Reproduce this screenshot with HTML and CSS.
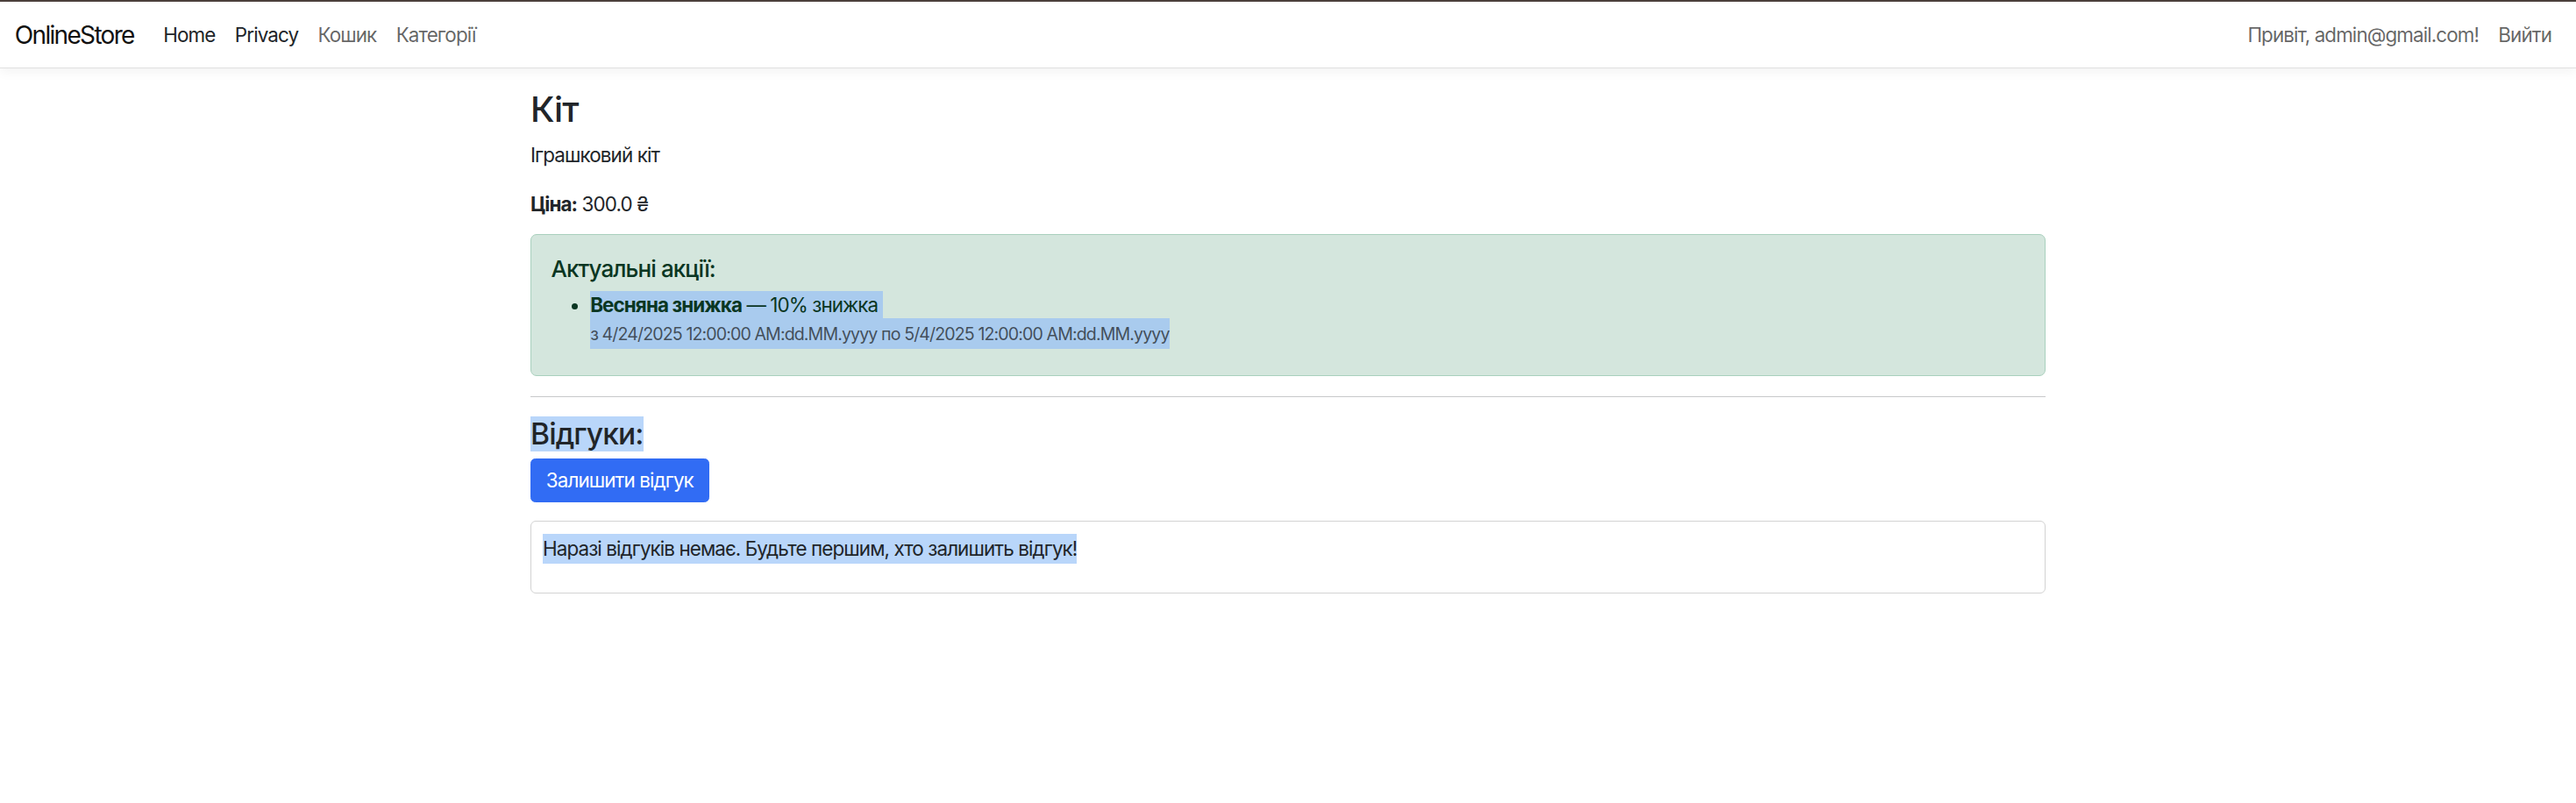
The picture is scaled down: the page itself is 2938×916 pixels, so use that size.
FILE: index.html
```html
<!DOCTYPE html>
<html lang="uk">
<head>
<meta charset="utf-8">
<title>Кіт - OnlineStore</title>
<link rel="stylesheet" href="styles.css">
</head>
<body>
<header class="navbar">
  <div class="nav-left">
    <a class="brand" href="#">OnlineStore</a>
    <nav class="nav-links">
      <a class="nav-link dark" href="#">Home</a>
      <a class="nav-link dark" href="#">Privacy</a>
      <a class="nav-link" href="#">Кошик</a>
      <a class="nav-link" href="#">Категорії</a>
    </nav>
  </div>
  <nav class="nav-links">
    <a class="nav-link" href="#">Привіт, admin@gmail.com!</a>
    <a class="nav-link" href="#">Вийти</a>
  </nav>
</header>
<main class="container">
  <h1 class="title">Кіт</h1>
  <p class="desc">Іграшковий кіт</p>
  <p class="price"><strong>Ціна:</strong> 300.0 ₴</p>
  <section class="alert">
    <h5 class="alert-title">Актуальні акції:</h5>
    <ul class="promo-list">
      <li><span class="sel sel-green line1"><strong>Весняна знижка</strong> — 10% знижка</span><br><span class="sel sel-green line2"><small class="muted">з 4/24/2025 12:00:00 AM:dd.MM.yyyy по 5/4/2025 12:00:00 AM:dd.MM.yyyy</small></span></li>
    </ul>
  </section>
  <hr class="divider">
  <h4 class="reviews-title"><span class="sel sel-white">Відгуки: </span></h4>
  <button class="btn-primary" type="button">Залишити відгук</button>
  <div class="review-box">
    <p class="review-empty"><span class="sel sel-white">Наразі відгуків немає. Будьте першим, хто залишить відгук!</span></p>
  </div>
</main>
</body>
</html>
```
FILE: styles.css
```css
* { box-sizing: border-box; }
html, body { margin: 0; padding: 0; }
body {
  font-family: Inter, "Noto Sans", "Liberation Sans", sans-serif;
  font-size: 22.4px;
  line-height: 1.5;
  letter-spacing: -0.04em;
  color: #212529;
  background: #fff;
}
a { text-decoration: none; }

.navbar {
  display: flex;
  justify-content: space-between;
  align-items: center;
  height: 78px;
  border-top: 2px solid #4b403c;
  border-bottom: 1px solid #e0e0e0;
  box-shadow: 0 4px 12px rgba(0,0,0,0.05);
  padding: 0 16.8px;
}
.nav-left { display: flex; align-items: center; }
.brand {
  font-size: 28px;
  letter-spacing: -0.06em;
  color: #111;
  margin-right: 22.4px;
  line-height: 42px;
}
.nav-links { display: flex; align-items: center; }
.nav-link {
  padding: 0 11.2px;
  color: rgba(0,0,0,0.62);
  line-height: 33.6px;
}
.nav-link.dark { color: #212529; }

.container {
  width: 1728px;
  margin: 23px auto 0;
}
.title {
  font-size: 40px;
  font-weight: 500;
  line-height: 48px;
  margin: 0 0 11px;
}
.desc { margin: 0 0 22.4px; }
.price { margin: 0 0 17px; }
.price strong { font-weight: 700; }

.alert {
  background: #d4e6dd;
  border: 1px solid #a9d0bd;
  border-radius: 7px;
  padding: 22.4px 22.4px 30px;
  color: #0a3622;
}
.alert-title {
  font-size: 26px;
  font-weight: 500;
  line-height: 33.6px;
  margin: 0 0 8px;
}
.promo-list {
  margin: 0;
  padding-left: 44.8px;
}
.promo-list li { line-height: 31px; }
.sel { display: inline-block; }
.sel-green { background: #a9cbee; }
.sel-white { background: #b9d6fa; }
.line1 { padding-right: 6px; line-height: 31px; }
.line1 strong { font-weight: 700; }
.line2 { line-height: 33.6px; vertical-align: top; }
.muted { font-size: 19.6px; color: rgba(33,37,41,0.75); }

.divider {
  border: 0;
  border-top: 1px solid #c8c9ca;
  margin: 22.4px 0;
}
.reviews-title {
  font-size: 33.6px;
  font-weight: 500;
  line-height: 40px;
  margin: 0 0 8px;
}
.btn-primary {
  display: block;
  font-family: inherit;
  font-size: 22.4px;
  letter-spacing: -0.04em;
  line-height: 33.6px;
  padding: 7.2px 16.8px;
  color: #fff;
  background: #316cf4;
  border: 1px solid #316cf4;
  border-radius: 5.6px;
  margin: 0 0 21px;
}
.review-box {
  border: 1px solid #d3d3d3;
  border-radius: 6px;
  padding: 14px 13px 11px;
}
.review-empty { margin: 0 0 22px; }
```
